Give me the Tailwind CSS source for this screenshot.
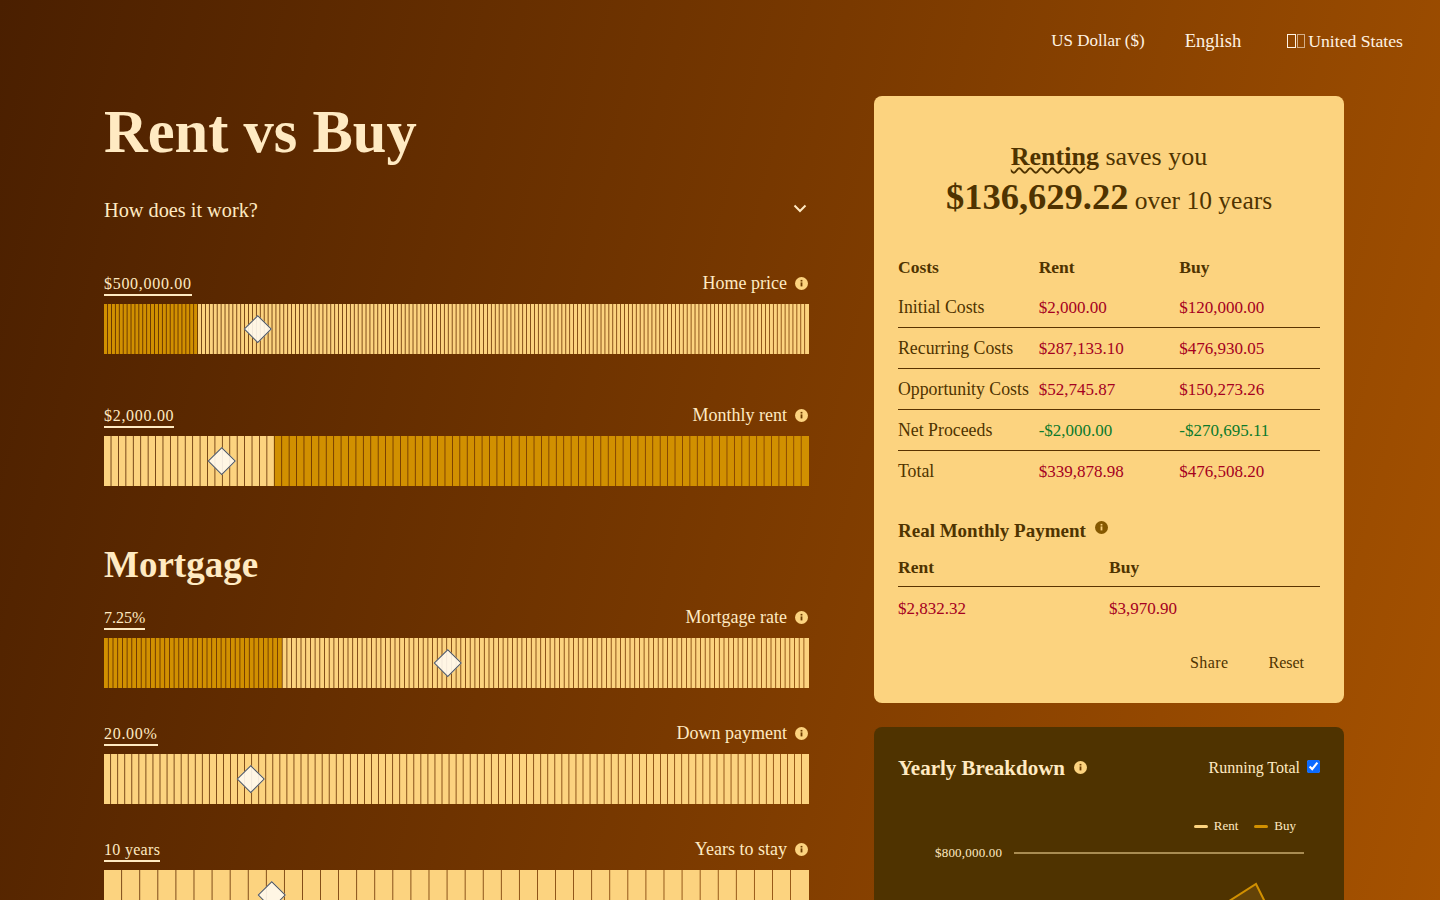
<!DOCTYPE html>
<html lang="en">
<head>
  <meta charset="UTF-8">
  <title>Rent vs Buy</title>
  <script src="https://cdn.jsdelivr.net/npm/@tailwindcss/browser@4"></script>
</head>
<body class="h-screen overflow-hidden bg-[linear-gradient(104deg,#4a1f00,#a65200)] font-['Liberation_Serif',serif] text-[#ffeac2]">
  <header class="flex justify-end items-start h-[82px] pr-[37px] pt-[30px] text-[17.7px] leading-[22px] text-[#fff3e3]">
    <span class="text-[17px]">US Dollar ($)</span>
    <span class="ml-[40px] text-[18.5px]">English</span>
    <span class="ml-[46px] flex items-center gap-[3px]">
      <span class="flex gap-px">
        <span class="w-[9px] h-[14px] border border-[#fff3e3]"></span>
        <span class="w-[8px] h-[14px] border border-[#fff3e3]/60"></span>
      </span>
      United States
    </span>
  </header>

  <main class="flex gap-[65px] pl-[104px] mt-[14px]">
    <div class="w-[705px] shrink-0">
      <h1 class="text-[60.5px] leading-[72px] font-bold text-[#ffeac2]">Rent vs Buy</h1>
      <div class="flex justify-between items-center mt-[28px] pr-px h-[28px]">
        <span class="text-[20.3px]">How does it work?</span>
        <svg class="w-4 h-4 text-[#ffeac2] -translate-y-[2px]" viewBox="0 0 16 16" fill="none" stroke="currentColor" stroke-width="2"><path d="M2.5 5.5 8 11l5.5-5.5"/></svg>
      </div>

      <section class="mt-[49px]">
        <div class="flex justify-between items-end h-[23px]">
          <span class="border-b-2 border-[#ffeac2] text-[16px] leading-[21px] h-[23px] tracking-[0.7px]">$500,000.00</span>
          <span class="flex items-center gap-[8px] text-[18px] leading-[21px] pr-px -translate-y-[2px]">Home price
            <svg class="w-[13px] h-[13px]" viewBox="0 0 13 13"><circle cx="6.5" cy="6.5" r="6.5" fill="#fcd37f"/><rect x="5.6" y="5.4" width="1.8" height="4" fill="#6b3b00"/><rect x="5.6" y="2.9" width="1.8" height="1.6" fill="#6b3b00"/></svg>
          </span>
        </div>
        <div class="relative h-[50px] mt-[8px]">
          <svg class="track block" width="705" height="50" data-bars="180" data-from="0" data-to="93"></svg>
          <div class="absolute left-[144.25px] top-[15.25px] w-[19.5px] h-[19.5px] rotate-45 bg-[#fffaf0]/90 border-[1.5px] border-[#4b5563]"></div>
        </div>
      </section>

      <section class="mt-[51px]">
        <div class="flex justify-between items-end h-[23px]">
          <span class="border-b-2 border-[#ffeac2] text-[16px] leading-[21px] h-[23px] tracking-[0.7px]">$2,000.00</span>
          <span class="flex items-center gap-[8px] text-[18px] leading-[21px] pr-px -translate-y-[2px]">Monthly rent
            <svg class="w-[13px] h-[13px]" viewBox="0 0 13 13"><circle cx="6.5" cy="6.5" r="6.5" fill="#fcd37f"/><rect x="5.6" y="5.4" width="1.8" height="4" fill="#6b3b00"/><rect x="5.6" y="2.9" width="1.8" height="1.6" fill="#6b3b00"/></svg>
          </span>
        </div>
        <div class="relative h-[50px] mt-[8px]">
          <svg class="track block" width="705" height="50" data-bars="95" data-from="170" data-to="705"></svg>
          <div class="absolute left-[108.25px] top-[15.25px] w-[19.5px] h-[19.5px] rotate-45 bg-[#fffaf0]/90 border-[1.5px] border-[#4b5563]"></div>
        </div>
      </section>

      <h2 class="text-[37px] leading-[46px] font-bold mt-[56px]">Mortgage</h2>

      <section class="mt-[19px]">
        <div class="flex justify-between items-end h-[23px]">
          <span class="border-b-2 border-[#ffeac2] text-[16px] leading-[21px] h-[23px]">7.25%</span>
          <span class="flex items-center gap-[8px] text-[18px] leading-[21px] pr-px -translate-y-[2px]">Mortgage rate
            <svg class="w-[13px] h-[13px]" viewBox="0 0 13 13"><circle cx="6.5" cy="6.5" r="6.5" fill="#fcd37f"/><rect x="5.6" y="5.4" width="1.8" height="4" fill="#6b3b00"/><rect x="5.6" y="2.9" width="1.8" height="1.6" fill="#6b3b00"/></svg>
          </span>
        </div>
        <div class="relative h-[50px] mt-[8px]">
          <svg class="track block" width="705" height="50" data-bars="150" data-from="0" data-to="179"></svg>
          <div class="absolute left-[334.25px] top-[15.25px] w-[19.5px] h-[19.5px] rotate-45 bg-[#fffaf0]/90 border-[1.5px] border-[#4b5563]"></div>
        </div>
      </section>

      <section class="mt-[35px]">
        <div class="flex justify-between items-end h-[23px]">
          <span class="border-b-2 border-[#ffeac2] text-[16px] leading-[21px] h-[23px] tracking-[0.7px]">20.00%</span>
          <span class="flex items-center gap-[8px] text-[18px] leading-[21px] pr-px -translate-y-[2px]">Down payment
            <svg class="w-[13px] h-[13px]" viewBox="0 0 13 13"><circle cx="6.5" cy="6.5" r="6.5" fill="#fcd37f"/><rect x="5.6" y="5.4" width="1.8" height="4" fill="#6b3b00"/><rect x="5.6" y="2.9" width="1.8" height="1.6" fill="#6b3b00"/></svg>
          </span>
        </div>
        <div class="relative h-[50px] mt-[8px]">
          <svg class="track block" width="705" height="50" data-bars="100" data-from="0" data-to="0"></svg>
          <div class="absolute left-[137.25px] top-[15.25px] w-[19.5px] h-[19.5px] rotate-45 bg-[#fffaf0]/90 border-[1.5px] border-[#4b5563]"></div>
        </div>
      </section>

      <section class="mt-[35px]">
        <div class="flex justify-between items-end h-[23px]">
          <span class="border-b-2 border-[#ffeac2] text-[16px] leading-[21px] h-[23px] tracking-[0.3px]">10 years</span>
          <span class="flex items-center gap-[8px] text-[18px] leading-[21px] pr-px -translate-y-[2px]">Years to stay
            <svg class="w-[13px] h-[13px]" viewBox="0 0 13 13"><circle cx="6.5" cy="6.5" r="6.5" fill="#fcd37f"/><rect x="5.6" y="5.4" width="1.8" height="4" fill="#6b3b00"/><rect x="5.6" y="2.9" width="1.8" height="1.6" fill="#6b3b00"/></svg>
          </span>
        </div>
        <div class="relative h-[50px] mt-[8px]">
          <svg class="track block" width="705" height="50" data-bars="39" data-from="0" data-to="0"></svg>
          <div class="absolute left-[158.25px] top-[15.25px] w-[19.5px] h-[19.5px] rotate-45 bg-[#fffaf0]/90 border-[1.5px] border-[#4b5563]"></div>
        </div>
      </section>
    </div>

    <div class="w-[470px] shrink-0">
      <div class="h-[607px] rounded-lg bg-[#fcd37f] px-[24px] pt-[44px] text-[#4f3300]">
        <div class="text-center text-[25.5px] leading-[34px] mb-[26px]">
          <div class="text-[26px]"><b class="underline decoration-wavy decoration-2 underline-offset-2">Renting</b> saves you</div>
          <div class="mt-px"><b class="text-[36.5px] leading-[44px]">$136,629.22</b> over 10 years</div>
        </div>

        <table class="w-full table-fixed text-[17px]">
          <tbody>
            <tr class="h-[41px] font-bold text-[17.5px] [&>td]:pt-[4px]"><td>Costs</td><td>Rent</td><td>Buy</td></tr>
            <tr class="h-[41px] border-b border-[#5a3300] [&>td]:pt-[2px]"><td class="text-[17.8px]">Initial Costs</td><td class="text-[#a50021]">$2,000.00</td><td class="text-[#a50021]">$120,000.00</td></tr>
            <tr class="h-[41px] border-b border-[#5a3300] [&>td]:pt-[2px]"><td class="text-[17.8px]">Recurring Costs</td><td class="text-[#a50021]">$287,133.10</td><td class="text-[#a50021]">$476,930.05</td></tr>
            <tr class="h-[41px] border-b border-[#5a3300] [&>td]:pt-[2px]"><td class="text-[17.8px] whitespace-nowrap">Opportunity Costs</td><td class="text-[#a50021]">$52,745.87</td><td class="text-[#a50021]">$150,273.26</td></tr>
            <tr class="h-[41px] border-b border-[#5a3300] [&>td]:pt-[2px]"><td class="text-[17.8px]">Net Proceeds</td><td class="text-[#0b7a2b]">-$2,000.00</td><td class="text-[#0b7a2b]">-$270,695.11</td></tr>
            <tr class="h-[41px] [&>td]:pt-[2px]"><td class="text-[17.8px]">Total</td><td class="text-[#a50021]">$339,878.98</td><td class="text-[#a50021]">$476,508.20</td></tr>
          </tbody>
        </table>

        <div class="flex items-start gap-[9px] mt-[27px] h-[28px]">
          <span class="text-[19px] leading-[26px] font-bold">Real Monthly Payment</span>
          <svg class="w-[13px] h-[13px] mt-[3px]" viewBox="0 0 13 13"><circle cx="6.5" cy="6.5" r="6.5" fill="#855800"/><rect x="5.6" y="5.4" width="1.8" height="4" fill="#fcd37f"/><rect x="5.6" y="2.9" width="1.8" height="1.6" fill="#fcd37f"/></svg>
        </div>
        <table class="w-full table-fixed text-[17px] mt-px">
          <tbody>
            <tr class="h-[39px] border-b border-[#5a3300] font-bold text-[17.5px] [&>td]:pt-[2px]"><td>Rent</td><td>Buy</td></tr>
            <tr class="h-[41px] text-[#a50021] [&>td]:pt-[4px]"><td>$2,832.32</td><td>$3,970.90</td></tr>
          </tbody>
        </table>

        <div class="flex justify-end gap-[40px] pr-[16px] mt-[26px] text-[16px] leading-[20px]">
          <span class="tracking-[0.4px]">Share</span>
          <span>Reset</span>
        </div>
      </div>

      <div class="mt-[24px] h-[400px] rounded-lg bg-[#4f3300] px-[24px] pt-[26px] text-[#ffeac2]">
        <div class="flex justify-between items-center h-[30px]">
          <div class="flex items-center gap-[9px]">
            <span class="text-[21px] leading-[30px] font-bold">Yearly Breakdown</span>
            <svg class="w-[13px] h-[13px] -translate-y-px" viewBox="0 0 13 13"><circle cx="6.5" cy="6.5" r="6.5" fill="#fcd37f"/><rect x="5.6" y="5.4" width="1.8" height="4" fill="#6b3b00"/><rect x="5.6" y="2.9" width="1.8" height="1.6" fill="#6b3b00"/></svg>
          </div>
          <label class="flex items-center gap-[7px] text-[16px]">Running Total
            <input type="checkbox" checked class="w-[13px] h-[13px] -translate-y-[2px] accent-[#0b6bff]">
          </label>
        </div>
        <div class="flex justify-end items-center gap-[6px] pr-[24px] mt-[34px] h-[18px] text-[13px]">
          <span class="w-[14px] h-[3px] rounded-full bg-[#fcd37f]"></span><span>Rent</span>
          <span class="w-[14px] h-[3px] rounded-full bg-[#d19000] ml-[10px]"></span><span>Buy</span>
        </div>
        <svg class="block mt-[9px] -ml-[24px]" width="470" height="60" viewBox="0 0 470 60">
          <line x1="140" y1="9" x2="430" y2="9" stroke="#a98c52" stroke-width="2"/>
          <text x="61" y="13" font-size="13" letter-spacing="0.2" fill="#ffeac2">$800,000.00</text>
          <path d="M330 73 382 40 398 72Z" fill="#644308" stroke="#d19000" stroke-width="2"/>
        </svg>
      </div>
    </div>
  </main>

  <script>
    // slider ticks: bars with a thin gap, the fractional pitch gives the uneven look of the original
    document.querySelectorAll('.track').forEach((svg) => {
      const bars = parseInt(svg.dataset.bars);
      const from = parseFloat(svg.dataset.from);
      const to = parseFloat(svg.dataset.to);
      const pitch = 705 / bars;
      let out = '';
      for (let i = 0; i < bars; i++) {
        const x = i * pitch;
        const mid = x + pitch / 2;
        const filled = mid >= from && mid < to;
        const w = i === bars - 1 ? pitch : pitch - 0.8;
        out += '<rect x="' + x + '" y="0" width="' + w + '" height="50" class="' + (filled ? 'fill-[#d19000]' : 'fill-[#fcd37f]') + '"/>';
      }
      svg.innerHTML = out;
    });
  </script>
</body>
</html>
